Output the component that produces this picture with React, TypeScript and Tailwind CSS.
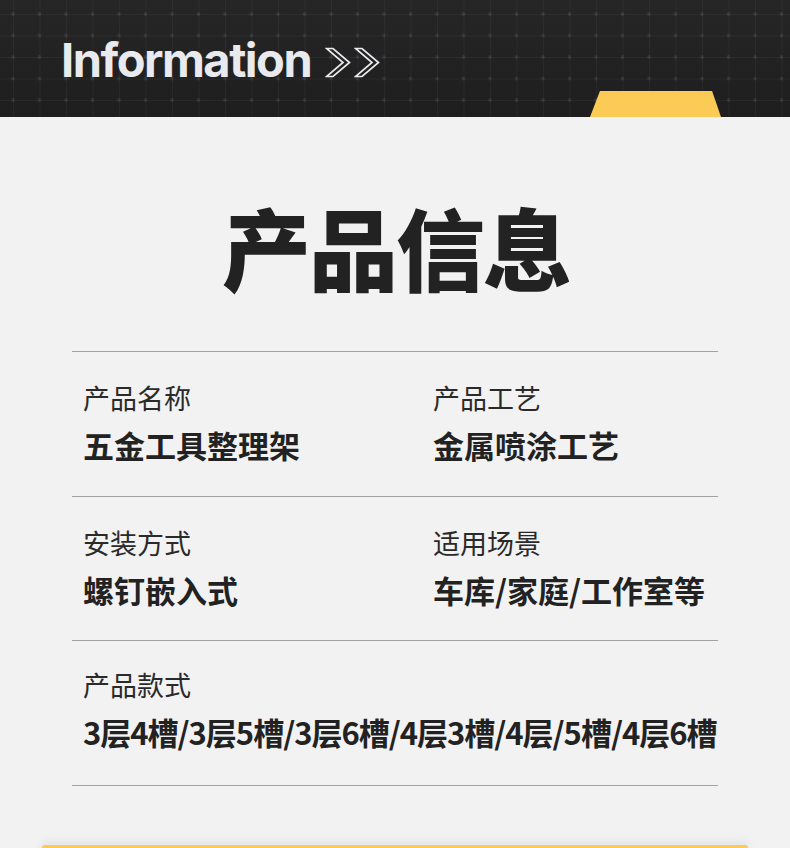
import React from "react";

const cjk = { fontFamily: '"Noto Sans CJK SC", "Noto Sans", sans-serif' };

function Chevron() {
  return (
    <svg width="26" height="31" viewBox="0 0 26 31" fill="none">
      <path d="M1.5 1.5 H8 L24.5 15.5 L8 29.5 H1.5 L18 15.5 Z" stroke="#e8eaee" strokeWidth="1.7" strokeLinejoin="miter" />
    </svg>
  );
}

function Item({ label, value, tight }: { label: string; value: string; tight?: boolean }) {
  return (
    <div className="flex flex-col">
      <div className="text-[27px] leading-[34px] text-[#2a2a2a]" style={cjk}>{label}</div>
      <div className={`mt-[10px] text-[31px] leading-[40px] font-bold text-[#222] whitespace-nowrap ${tight ? "tracking-[-1px]" : ""}`} style={cjk}>
        {value}
      </div>
    </div>
  );
}

export default function App() {
  return (
    <div className="w-[790px] h-[848px] bg-[#f2f2f2] overflow-hidden relative">
      {/* Header */}
      <div className="relative h-[117px] bg-[#212121] bg-[linear-gradient(rgba(255,255,255,0.04)_1px,transparent_1px),linear-gradient(90deg,rgba(255,255,255,0.04)_1px,transparent_1px),radial-gradient(circle,rgba(255,255,255,0.08)_1.5px,transparent_2.2px),linear-gradient(#262626,#1e1e1e)] bg-[size:26.5px_21.5px,26.5px_21.5px,26.5px_21.5px,100%_100%] bg-[position:13px_14px,13px_14px,-0.25px_3.25px,0_0]">
        <div className="flex items-center h-full pl-[61px] pt-[4px]">
          <span className="text-[47px] font-bold tracking-[-1.5px] text-[#e8eaee]" style={{ fontFamily: "Inter, 'Open Sans', sans-serif" }}>
            Information
          </span>
          <div className="flex ml-[14px] mt-[4px] gap-[3px]">
            <Chevron />
            <Chevron />
          </div>
        </div>
        <div className="absolute left-[590px] bottom-0 w-[131px] h-[26px] bg-[#fccb56] [clip-path:polygon(7.6%_0,93.2%_0,100%_100%,0_100%)]" />
      </div>

      {/* Title */}
      <div className="h-[234px] flex items-center justify-center pt-[22px]">
        <h1 className="text-[89px] font-black text-[#222] tracking-[-2px] leading-none pl-[2px]" style={cjk}>
          产品信息
        </h1>
      </div>

      <div className="mx-[72px] w-[646px]">
        <div className="border-t border-[#a3a3a3] h-[145px] grid grid-cols-[350px_1fr] items-center pl-[11px] pb-[2px]">
          <Item label="产品名称" value="五金工具整理架" />
          <Item label="产品工艺" value="金属喷涂工艺" />
        </div>
        <div className="border-t border-[#a3a3a3] h-[144px] grid grid-cols-[350px_1fr] items-center pl-[11px] pb-[2px]">
          <Item label="安装方式" value="螺钉嵌入式" />
          <Item label="适用场景" value="车库/家庭/工作室等" />
        </div>
        <div className="border-t border-[#a3a3a3] border-b h-[146px] flex items-center pl-[11px] pb-[6px]">
          <Item label="产品款式" value="3层4槽/3层5槽/3层6槽/4层3槽/4层/5槽/4层6槽" tight />
        </div>
      </div>

      <div className="absolute left-[42px] top-[845px] w-[706px] h-[40px] bg-[#fccb56] rounded-t-[3px] shadow-[0_-4px_10px_rgba(0,0,0,0.06)]" />
    </div>
  );
}
